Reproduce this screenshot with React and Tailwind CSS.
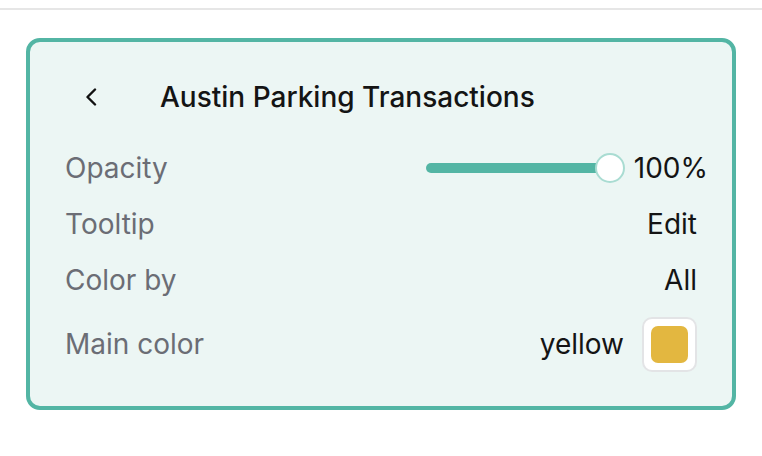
import React from 'react';

const Row = ({ label, children, className = '' }) => (
  <div className={`flex items-center justify-between ${className}`}>
    <span className="text-[28px] text-[#6b6d75]">{label}</span>
    {children}
  </div>
);

const App = () => {
  return (
    <div className="h-[456px] w-[762px] bg-white font-['Inter',sans-serif]">
      <div className="h-[10px] border-b-2 border-[#e6e6e6]" />

      <div className="ml-[26px] mt-[28px] h-[372px] w-[710px] rounded-[14px] border-4 border-[#53b5a4] bg-[#ecf6f4] px-[35px] pt-[31px]">
        {/* header */}
        <div className="flex h-[48px] items-center">
          <svg width="12" height="18" viewBox="0 0 12 18" className="ml-[20px]">
            <polyline
              points="10,1.5 2.5,9 10,16.5"
              fill="none"
              stroke="#111"
              strokeWidth="2.4"
              strokeLinecap="round"
              strokeLinejoin="round"
            />
          </svg>
          <h2 className="ml-[63px] text-[28px] font-medium text-[#141414]">Austin Parking Transactions</h2>
        </div>

        <div className="mt-[27px] flex flex-col gap-4">
          <Row label="Opacity" className="h-[40px]">
            <div className="mr-[-11px] flex items-center">
              <div className="relative h-[10px] w-[184px] rounded-full bg-[#53b5a4]">
                <div className="absolute right-[-15px] top-[-10px] h-[30px] w-[30px] rounded-full border-2 border-[#a9dcd2] bg-white" />
              </div>
              <span className="ml-[24px] text-[28px] text-[#141414]">100%</span>
            </div>
          </Row>

          <Row label="Tooltip" className="h-[40px]">
            <span className="text-[28px] text-[#141414]">Edit</span>
          </Row>

          <Row label="Color by" className="h-[40px]">
            <span className="text-[28px] text-[#141414]">All</span>
          </Row>

          <Row label="Main color" className="h-[56px]">
            <div className="flex items-center gap-[18px]">
              <span className="text-[28px] text-[#141414]">yellow</span>
              <div className="flex h-[55px] w-[55px] items-center justify-center rounded-[10px] border-2 border-[#e3e4e6] bg-white">
                <div className="h-[37px] w-[37px] rounded-[7px] bg-[#e3b740]" />
              </div>
            </div>
          </Row>
        </div>
      </div>
    </div>
  );
};

export default App;
